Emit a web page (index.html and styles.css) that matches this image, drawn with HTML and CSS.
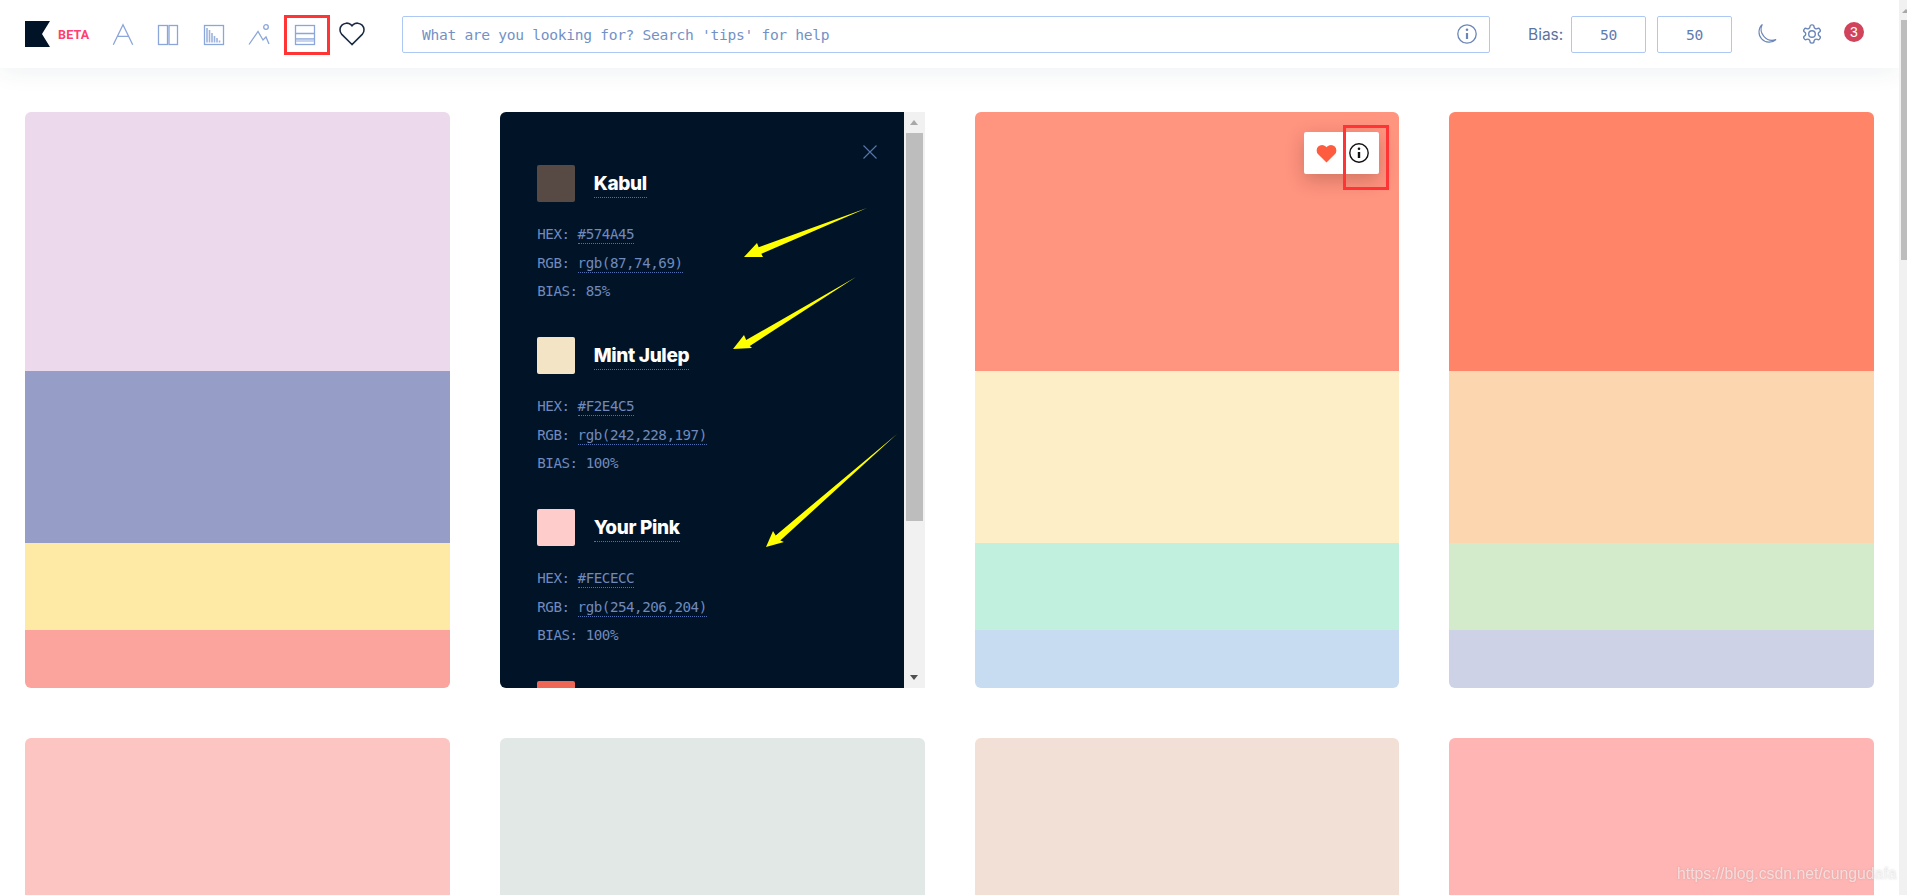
FILE: index.html
```html
<!DOCTYPE html>
<html lang="en">
<head>
<meta charset="utf-8">
<title>Khroma</title>
<link rel="stylesheet" href="styles.css">
</head>
<body>
<div class="page">
  <header class="topbar">
    <svg class="logo" viewBox="0 0 25 26"><polygon points="0,0 25,0 17,13 25,26 0,26"/></svg>
    <span class="beta">BETA</span>
    <nav class="views">
      <svg class="view" viewBox="0 0 20 21"><path d="M0.3 20.7 10 0.7 19.7 20.7M4.2 12.3H15.8"/></svg>
      <svg class="view" viewBox="0 0 20 21"><rect x="0.5" y="1.5" width="9" height="19"/><rect x="11" y="1.5" width="8.5" height="19"/></svg>
      <svg class="view" viewBox="0 0 20 21"><rect x="0.5" y="1.5" width="19" height="19"/><path class="thick" d="M3 4V18.5M5.5 6V18.5M8 9V18.5M10.5 12V18.5M13 14V18.5M15.5 16.5V18.5"/></svg>
      <svg class="view" viewBox="0 0 20 21"><path d="M0 20.5 9 7.5 14 16 17 13 20 20"/><circle cx="17" cy="3" r="2.3"/></svg>
      <svg class="view" viewBox="0 0 20 21"><rect x="0.5" y="1.5" width="19" height="19"/><path d="M0.5 9.5H19.5M0.5 15H19.5"/><rect class="band-fill" x="1" y="15.5" width="18" height="2.5"/></svg>
      <svg class="view-heart" viewBox="1.2 1.4 21.6 19.8"><path d="M12 20.8 2.6 11.4A6 6 0 0 1 11 2.9L12 3.9 13 2.9A6 6 0 0 1 21.4 11.4Z"/></svg>
    </nav>
    <div class="search">
      <input class="search-input" type="text" placeholder="What are you looking for? Search 'tips' for help">
      <svg class="search-info" viewBox="0 0 20 20"><circle cx="10" cy="10" r="9.2"/><path class="info-stem" d="M10 9V15"/><circle class="info-dot" cx="10" cy="5.7" r="1.3"/></svg>
    </div>
    <div class="bias">
      <span class="bias-label">Bias:</span>
      <input class="bias-input" type="text" value="50">
      <input class="bias-input" type="text" value="50">
    </div>
    <svg class="moon" viewBox="0 0 24 24"><path d="M8 1.5A10.6 10.6 0 1 0 23 18 12 12 0 0 1 8 1.5Z"/></svg>
    <svg class="gear" viewBox="0 0 24 24"><path d="M12.22 2h-.44a2 2 0 0 0-2 2v.18a2 2 0 0 1-1 1.73l-.43.25a2 2 0 0 1-2 0l-.15-.08a2 2 0 0 0-2.73.73l-.22.38a2 2 0 0 0 .73 2.73l.15.1a2 2 0 0 1 1 1.72v.51a2 2 0 0 1-1 1.74l-.15.09a2 2 0 0 0-.73 2.73l.22.38a2 2 0 0 0 2.73.73l.15-.08a2 2 0 0 1 2 0l.43.25a2 2 0 0 1 1 1.73V20a2 2 0 0 0 2 2h.44a2 2 0 0 0 2-2v-.18a2 2 0 0 1 1-1.73l.43-.25a2 2 0 0 1 2 0l.15.08a2 2 0 0 0 2.73-.73l.22-.39a2 2 0 0 0-.73-2.73l-.15-.08a2 2 0 0 1-1-1.74v-.5a2 2 0 0 1 1-1.74l.15-.09a2 2 0 0 0 .73-2.73l-.22-.38a2 2 0 0 0-2.73-.73l-.15.08a2 2 0 0 1-2 0l-.43-.25a2 2 0 0 1-1-1.73V4a2 2 0 0 0-2-2z"/><circle cx="12" cy="12" r="3.6"/></svg>
    <span class="badge">3</span>
  </header>

  <main class="grid">
    <article class="card">
      <div class="band b45 c1a"></div><div class="band b30 c1b"></div><div class="band b15 c1c"></div><div class="band b10 c1d"></div>
    </article>

    <article class="panel">
      <div class="panel-body">
        <svg class="close" viewBox="0 0 14 14"><path d="M0.5 0.5 13.5 13.5M13.5 0.5 0.5 13.5"/></svg>
        <section class="color">
          <div class="color-head"><span class="swatch s-kabul"></span><span class="name">Kabul</span></div>
          <p class="row">HEX: <span class="val">#574A45</span></p>
          <p class="row">RGB: <span class="val">rgb(87,74,69)</span></p>
          <p class="row">BIAS: 85%</p>
        </section>
        <section class="color">
          <div class="color-head"><span class="swatch s-mint"></span><span class="name">Mint Julep</span></div>
          <p class="row">HEX: <span class="val">#F2E4C5</span></p>
          <p class="row">RGB: <span class="val">rgb(242,228,197)</span></p>
          <p class="row">BIAS: 100%</p>
        </section>
        <section class="color">
          <div class="color-head"><span class="swatch s-pink"></span><span class="name">Your Pink</span></div>
          <p class="row">HEX: <span class="val">#FECECC</span></p>
          <p class="row">RGB: <span class="val">rgb(254,206,204)</span></p>
          <p class="row">BIAS: 100%</p>
        </section>
        <section class="color">
          <div class="color-head"><span class="swatch s-red"></span></div>
        </section>
      </div>
      <div class="panel-scroll">
        <span class="arrow-up"></span>
        <span class="panel-thumb"></span>
        <span class="arrow-down"></span>
      </div>
    </article>

    <article class="card">
      <div class="band b45 c3a"></div><div class="band b30 c3b"></div><div class="band b15 c3c"></div><div class="band b10 c3d"></div>
      <div class="actions">
        <svg class="act-heart" viewBox="0 0 24 22"><path d="M12 21.5 2.4 11.8A6.2 6.2 0 0 1 11.2 3L12 3.8 12.8 3A6.2 6.2 0 0 1 21.6 11.8Z"/></svg>
        <svg class="act-info" viewBox="0 0 20 20"><circle cx="10" cy="10" r="9.2"/><path class="info-stem" d="M10 9V15"/><circle class="info-dot" cx="10" cy="5.7" r="1.3"/></svg>
      </div>
    </article>

    <article class="card">
      <div class="band b45 c4a"></div><div class="band b30 c4b"></div><div class="band b15 c4c"></div><div class="band b10 c4d"></div>
    </article>

    <article class="card c5"></article>
    <article class="card c6"></article>
    <article class="card c7"></article>
    <article class="card c8"></article>
  </main>
</div>

<div class="page-scroll">
  <span class="page-arrow"></span>
  <span class="page-thumb"></span>
</div>

<svg class="annotations" viewBox="0 0 1907 895">
  <rect class="mark" x="285.5" y="16.5" width="43" height="37"/>
  <rect class="mark" x="1344.5" y="126.5" width="43" height="62"/>
  <polygon class="arrow" points="867,208 758.7,247.2 757,243 744,257 763,257 761.3,253.8"/>
  <polygon class="arrow" points="856,277 746.2,340 744,335 733,349 752,348 749.8,346"/>
  <polygon class="arrow" points="897,434 775.7,535.4 773,531 766,547 784,542 780.3,540.6"/>
</svg>
<span class="watermark">https://blog.csdn.net/cungudafa</span>
</body>
</html>
```

FILE: styles.css
```css
* { box-sizing: border-box; }
html, body { margin: 0; height: 100%; overflow: hidden; background: #fff; }
body { position: relative; font-family: "Inter", "Liberation Sans", sans-serif; }

.page { width: 1899px; height: 895px; overflow: hidden; display: flex; flex-direction: column; }

/* Top bar */
.topbar {
  flex: none; height: 68px; display: flex; align-items: center; padding: 0 35px 0 25px;
  background: #fff; box-shadow: 0 4px 24px rgba(30, 50, 70, .07); position: relative; z-index: 2;
}
.logo { width: 25px; height: 26px; fill: #011327; flex: none; }
.beta { margin-left: 8px; width: 30px; font: 700 12.5px "Roboto", sans-serif; color: #ff4070; letter-spacing: .2px; }
.views { display: flex; align-items: center; gap: 25.4px; margin-left: 25px; }
.view { width: 20px; height: 21px; fill: none; stroke: #8ba6d9; stroke-width: 1.3; overflow: visible; }
.view .thick { stroke-width: 1.6; stroke: #9db3dd; }
.view .band-fill { fill: #c5d3ee; stroke: none; }
.view-heart { width: 24px; height: 22px; fill: none; stroke: #1b2a44; stroke-width: 1.4; overflow: visible; }

.search { flex: 1; height: 37px; margin: 0 38px; display: flex; align-items: center; border: 1px solid #aec8f5; border-radius: 2px; padding-right: 12px; }
.search-input { flex: 1; min-width: 0; border: 0; outline: 0; padding: 0 0 0 19px; background: transparent; font: 14.6px "DejaVu Sans Mono", monospace; letter-spacing: -.3px; color: #6d8cc2; }
.search-input::placeholder { color: #7391c6; opacity: 1; }
.search-info { width: 20px; height: 20px; flex: none; fill: none; stroke: #6a86b8; stroke-width: 1.3; }
.search-info .info-stem { stroke-width: 2.2; }
.search-info .info-dot { fill: #6a86b8; stroke: none; }

.bias { display: flex; align-items: center; gap: 11px; }
.bias-label { font-size: 15.5px; color: #5b74a0; margin-right: -3px; width: 35px; white-space: nowrap; }
.bias-input { width: 75px; height: 37px; border: 1px solid #aec8f5; border-radius: 2px; outline: 0; background: #fff; text-align: center; font: 14.6px "DejaVu Sans Mono", monospace; letter-spacing: -.3px; color: #5e7db3; padding: 0; }

.moon { width: 22px; height: 22px; margin-left: 23px; fill: none; stroke: #6a86b8; stroke-width: 1.2; flex: none; }
.gear { width: 22px; height: 22px; margin-left: 24px; fill: none; stroke: #6a86b8; stroke-width: 1.5; flex: none; }
.badge { width: 20px; height: 20px; margin-left: 21px; margin-top: -4px; border-radius: 50%; background: #d0435a; color: #fff; font: 14px/20px "Liberation Sans", sans-serif; text-align: center; flex: none; }

/* Palette grid */
.grid { flex: 1; display: grid; grid-template-columns: repeat(4, 1fr); grid-auto-rows: 576px; gap: 50px; padding: 44px 25px 0; }
.card { position: relative; display: flex; flex-direction: column; border-radius: 6px; overflow: hidden; }
.band { flex: none; }
.b45 { height: 45%; } .b30 { height: 29.85%; } .b15 { height: 15.15%; } .b10 { height: 10%; }
.c1a { background: #ecd9ec; } .c1b { background: #969dc7; } .c1c { background: #fee9a5; } .c1d { background: #fba49d; }
.c3a { background: #ff947f; } .c3b { background: #feeec7; } .c3c { background: #c1f0df; } .c3d { background: #c8dcf1; }
.c4a { background: #ff8468; } .c4b { background: #fbd6af; } .c4c { background: #d4ebcb; } .c4d { background: #cdd2e6; }
.c5 { background: #fcc5c1; } .c6 { background: #e1e8e6; } .c7 { background: #f2dfd5; } .c8 { background: #ffb5b3; }

.actions { position: absolute; top: 20px; right: 20px; width: 75px; height: 42px; display: flex; align-items: center; gap: 12px; padding-left: 12px; background: #fff; border-radius: 2px; box-shadow: 0 6px 18px rgba(90, 40, 30, .28); }
.act-heart { width: 21px; height: 19px; fill: #ff5c3f; flex: none; }
.act-info { width: 20px; height: 20px; fill: none; stroke: #111; stroke-width: 1.4; flex: none; }
.act-info .info-stem { stroke-width: 2.4; }
.act-info .info-dot { fill: #111; stroke: none; }

/* Open detail panel */
.panel { display: flex; border-radius: 6px 0 0 6px; overflow: hidden; background: #011327; }
.panel-body { position: relative; flex: 1; min-width: 0; overflow: hidden; padding: 53px 0 0 37px; }
.close { position: absolute; top: 33px; right: 27px; width: 14px; height: 14px; fill: none; stroke: #5a76a8; stroke-width: 1.1; }
.color { height: 172px; }
.color-head { display: flex; align-items: flex-start; gap: 19px; height: 37px; }
.swatch { width: 38px; height: 37px; border-radius: 2px; flex: none; }
.s-kabul { background: #574a45; } .s-mint { background: #f2e4c5; } .s-pink { background: #fecdcb; } .s-red { background: #ee6655; }
.name { margin-top: 6px; font-size: 19px; font-weight: 800; line-height: 26px; letter-spacing: -.35px; color: #fff; border-bottom: 1px dotted #4f70b0; }
.row { margin: 0; height: 28.5px; padding-left: .5px; font: 14.2px/28.5px "DejaVu Sans Mono", monospace; letter-spacing: -.47px; color: #708abd; }
.color-head + .row { margin-top: 18px; }
.val { border-bottom: 1px dotted #4f70b0; padding-bottom: 1px; }

.panel-scroll { position: relative; flex: none; width: 21px; background: #f1f1f1; padding: 21px 2px 0; }
.panel-thumb { display: block; height: 388px; background: #bdbdbd; }
.arrow-up, .arrow-down { position: absolute; left: 6px; width: 0; height: 0; border-left: 4.5px solid transparent; border-right: 4.5px solid transparent; }
.arrow-up { top: 8px; border-bottom: 5px solid #a8a8a8; }
.arrow-down { bottom: 8px; border-top: 5px solid #505050; }

/* Window scrollbar */
.page-scroll { position: fixed; top: 0; right: 0; bottom: 0; width: 8px; background: #f1f1f1; padding: 20px 0 0 2px; }
.page-thumb { display: block; height: 240px; background: #bdbdbd; }
.page-arrow { position: absolute; top: 9px; left: 3px; border-left: 4px solid transparent; border-right: 4px solid transparent; border-bottom: 4px solid #a8a8a8; }

/* Annotations drawn on the screenshot */
.annotations { position: absolute; left: 0; top: 0; width: 1907px; height: 895px; pointer-events: none; z-index: 5; }
.mark { fill: none; stroke: #ff3434; stroke-width: 3; }
.arrow { fill: #ffff00; }
.watermark { position: absolute; left: 1677px; top: 865px; font: 15.8px "Liberation Sans", sans-serif; color: rgba(255, 255, 255, .6); text-shadow: 0 0 2px rgba(120, 120, 120, .35); z-index: 6; white-space: nowrap; }
```
